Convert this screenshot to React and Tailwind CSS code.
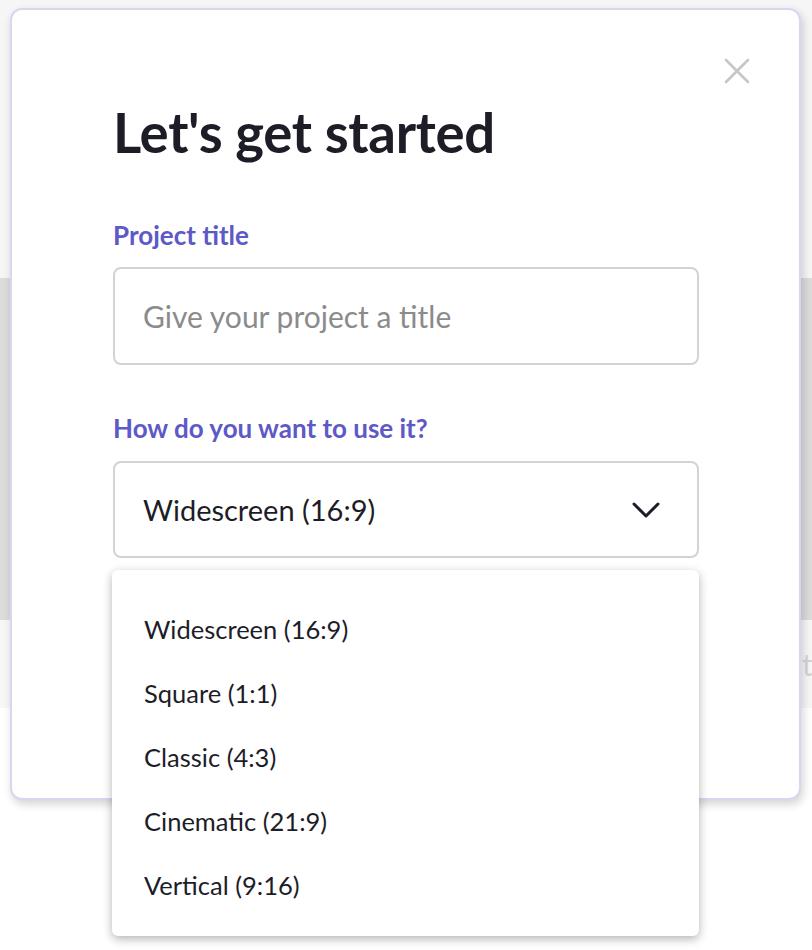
import { useState } from 'react'

const OPTIONS = ['Widescreen (16:9)', 'Square (1:1)', 'Classic (4:3)', 'Cinematic (21:9)', 'Vertical (9:16)']

const font = { fontFamily: 'Lato, "Noto Sans", sans-serif' }

export default function App() {
  const [title, setTitle] = useState('')
  const [usage, setUsage] = useState(OPTIONS[0])
  const [open, setOpen] = useState(true)

  return (
    <div className="relative w-full h-[950px] overflow-hidden bg-white" style={font}>
      {/* page behind the modal */}
      <div className="flex flex-col">
        <div className="h-[278px] bg-[#f6f6f6]" />
        <div className="h-[342px] bg-[#dcdcdc]" />
        <div className="h-[88px] bg-[#f7f7f7] flex items-center pl-[802px] whitespace-nowrap text-[30px] text-[#d4d4d4]">
          t
        </div>
      </div>

      {/* modal */}
      <div className="absolute left-[10px] top-[8px] w-[791px] h-[792px] bg-white rounded-[12px] border-2 border-[#d9d7f0] shadow-[2px_4px_10px_rgba(0,0,0,0.18)] pl-[101px] pr-[100px] pt-[90px]">
        <button className="absolute right-[49px] top-[48px] text-[#c6c6c6]" aria-label="Close">
          <svg width="26" height="26" viewBox="0 0 26 26" fill="none" stroke="currentColor" strokeWidth="2.6" strokeLinecap="round">
            <path d="M2 2L24 24M24 2L2 24" />
          </svg>
        </button>

        <h1 className="text-[54.5px] leading-[64px] font-bold text-[#1d1d28] tracking-[-0.3px]">Let's get started</h1>

        <label className="block mt-[56px] text-[26px] leading-[30px] font-bold text-[#5d59c6]">Project title</label>
        <input
          type="text"
          value={title}
          onChange={(e) => setTitle(e.target.value)}
          placeholder="Give your project a title"
          className="block mt-[17px] w-[586px] h-[98px] rounded-[8px] border-2 border-[#d3d3d3] px-[28px] text-[30px] text-[#1d1d28] placeholder-[#8b8b8b] focus:outline-none"
          style={font}
        />

        <label className="block mt-[48px] text-[26px] leading-[30px] font-bold text-[#5d59c6]">How do you want to use it?</label>
        <div className="relative mt-[18px] w-[586px]">
          <button
            onClick={() => setOpen(!open)}
            className="w-full h-[97px] rounded-[8px] border-2 border-[#d3d3d3] pl-[28px] pr-[37px] flex items-center justify-between text-[29px] text-[#1d1d28]"
            style={font}
          >
            <span>{usage}</span>
            <svg width="28" height="18" viewBox="0 0 28 18" fill="none" stroke="#1d1d28" strokeWidth="3" strokeLinecap="round" strokeLinejoin="round">
              <path d="M2 3L14 15L26 3" />
            </svg>
          </button>

          {open && (
            <div className="absolute left-[-1px] top-[109px] w-[587px] bg-white rounded-[6px] shadow-[0_3px_10px_rgba(0,0,0,0.3)] pt-[27px] pb-[19px] z-10">
              {OPTIONS.map((opt) => (
                <div
                  key={opt}
                  onClick={() => { setUsage(opt); setOpen(false) }}
                  className="h-[64px] flex items-center pl-[32px] text-[25.5px] text-[#1d1d28] cursor-pointer"
                >
                  {opt}
                </div>
              ))}
            </div>
          )}
        </div>
      </div>
    </div>
  )
}
